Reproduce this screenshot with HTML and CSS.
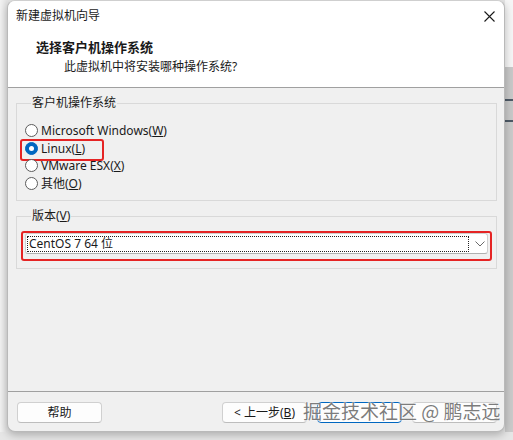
FILE: index.html
```html
<!DOCTYPE html>
<html lang="zh-CN">
<head>
<meta charset="utf-8">
<title>新建虚拟机向导</title>
<link rel="stylesheet" href="styles.css">
</head>
<body>
<div class="desk">
  <div class="left-gap"></div>
  <div class="dialog">
    <div class="header">
      <div class="titlebar">
        <span class="title">新建虚拟机向导</span>
        <svg class="close" width="11" height="11" viewBox="0 0 11 11"><path d="M0.5 0.5 L10.5 10.5 M10.5 0.5 L0.5 10.5" stroke="#1a1a1a" stroke-width="1.1" fill="none"/></svg>
      </div>
      <div class="heading">选择客户机操作系统</div>
      <div class="subheading">此虚拟机中将安装哪种操作系统?</div>
    </div>
    <div class="body">
      <fieldset class="group group-os">
        <legend>客户机操作系统</legend>
        <div class="radio"><span class="dot"></span><span>Microsoft Windows(<u>W</u>)</span></div>
        <div class="radio checked mark"><span class="dot"></span><span>Linux(<u>L</u>)</span></div>
        <div class="radio"><span class="dot"></span><span>VMware ESX(<u>X</u>)</span></div>
        <div class="radio"><span class="dot"></span><span>其他(<u>O</u>)</span></div>
      </fieldset>
      <fieldset class="group group-ver">
        <legend>版本(<u>V</u>)</legend>
        <div class="combo mark-combo">
          <div class="combo-text"><span>CentOS 7 64 位</span></div>
          <svg class="chev" width="10" height="6" viewBox="0 0 10 6"><path d="M0.5 0.5 L5 5 L9.5 0.5" stroke="#6a6a6a" stroke-width="1" fill="none"/></svg>
        </div>
      </fieldset>
    </div>
    <div class="footer">
      <button class="btn">帮助</button>
      <div class="spacer"></div>
      <button class="btn">&lt; 上一步(<u>B</u>)</button>
      <button class="btn primary" aria-label="下一步(N) &gt;"></button>
      <button class="btn" aria-label="取消"></button>
      <div class="watermark">掘金技术社区 @ 鹏志远</div>
    </div>
  </div>
  <div class="right-strip"></div>
</div>
</body>
</html>
```

FILE: styles.css
```css
* { box-sizing: border-box; }
html, body { margin: 0; padding: 0; }
body {
  width: 513px;
  height: 440px;
  overflow: hidden;
  background: #e6e6e6;
  font-family: "Noto Sans", "Noto Sans CJK SC", sans-serif;
  font-size: 12px;
  color: #1a1a1a;
}
.desk {
  display: flex;
  height: 440px;
}
.left-gap {
  width: 7px;
  height: 432px;
  background: linear-gradient(to right, #f2f2f2, #e4e4e4);
}
.dialog {
  width: 498px;
  height: 432px;
  border: 1px solid #b9b9b9;
  border-top-color: #cfcfcf;
  border-radius: 8px;
  background: #f0f0f0;
  display: flex;
  flex-direction: column;
  box-shadow: 0 3px 8px rgba(0,0,0,0.25);
  position: relative;
  overflow: hidden;
}
.right-strip {
  flex: 1;
  height: 432px;
  background:
    linear-gradient(#f6f6f6 0 67px, #c9c9c9 67px 99px, #4d5966 99px 101px, #c9c9c9 101px 120px, #4d5966 120px 122px, #cbcbcb 122px);
}
.header {
  height: 87px;
  background: #ffffff;
  border-bottom: 1px solid #a0a0a0;
  flex: none;
}
.titlebar {
  display: flex;
  align-items: center;
  justify-content: space-between;
  height: 30px;
  padding: 0 9px 0 8px;
}
.title { line-height: 16px; }
.heading {
  font-weight: bold;
  font-size: 13px;
  line-height: 16px;
  padding-left: 28px;
  margin-top: 8px;
}
.subheading {
  line-height: 16px;
  padding-left: 56px;
  margin-top: 4px;
}
.body {
  flex: 1;
  padding: 0 7px 0 8px;
}
.group {
  border: 1px solid #d9d9d9;
  margin: 0;
  padding: 0 8px;
}
.group legend {
  padding: 0 1px;
  margin-left: 6px;
  line-height: 16px;
}
.group-os {
  margin-top: 7px;
  height: 106px;
  padding-top: 11px;
}
.radio {
  display: flex;
  align-items: center;
  height: 17.5px;
  gap: 3px;
  position: relative;
}
.dot {
  width: 13px;
  height: 13px;
  border-radius: 50%;
  border: 1px solid #5c5c5c;
  background: #fff;
  flex: none;
  position: relative;
}
.checked .dot {
  border-color: #0067c0;
  background: #0067c0;
}
.checked .dot::after {
  content: "";
  position: absolute;
  left: 3px;
  top: 3px;
  width: 5px;
  height: 5px;
  border-radius: 50%;
  background: #fff;
}
.mark::before {
  content: "";
  position: absolute;
  left: -5px;
  top: -1px;
  width: 80px;
  height: 18px;
  border: 2px solid #e52424;
  border-radius: 3px;
}
.group-ver {
  margin-top: 7px;
  height: 61px;
  padding-top: 9px;
}
.combo {
  height: 21px;
  background: #fff;
  border: 1px solid #d0d0d0;
  border-bottom-color: #b0b0b0;
  border-radius: 3px;
  display: flex;
  align-items: center;
  padding: 2px 2px 1px 1px;
  position: relative;
}
.mark-combo::before {
  content: "";
  position: absolute;
  left: -5px;
  right: -5px;
  top: -3px;
  bottom: -8px;
  border: 2.5px solid #e52424;
  border-radius: 3px;
}
.combo-text {
  width: 442px;
  height: 16px;
  border: 1px dotted #222;
  display: flex;
  align-items: center;
  padding-left: 1px;
  line-height: 14px;
}
.chev {
  margin-left: 6px;
}
.footer {
  flex: none;
  height: 40px;
  border-top: 1px solid #a0a0a0;
  display: flex;
  align-items: flex-start;
  padding: 10px 7px 0 9px;
  gap: 10px;
  position: relative;
}
.spacer { flex: 1; }
.btn {
  width: 85px;
  height: 21px;
  background: #fdfdfd;
  border: 1px solid #d0d0d0;
  border-bottom-color: #bdbdbd;
  border-radius: 4px;
  font-family: inherit;
  font-size: 12px;
  color: #1a1a1a;
  padding: 0;
  line-height: 18px;
}
.btn.primary {
  border: 1px solid #0067c0;
}
.watermark {
  position: absolute;
  left: 295px;
  top: 7px;
  font-size: 19px;
  line-height: 24px;
  color: rgba(100,100,100,0.85);
  text-shadow: 0 0 2px #fff, 0 0 1px #fff;
  white-space: nowrap;
  font-family: "Noto Sans CJK SC", sans-serif;
}
```
